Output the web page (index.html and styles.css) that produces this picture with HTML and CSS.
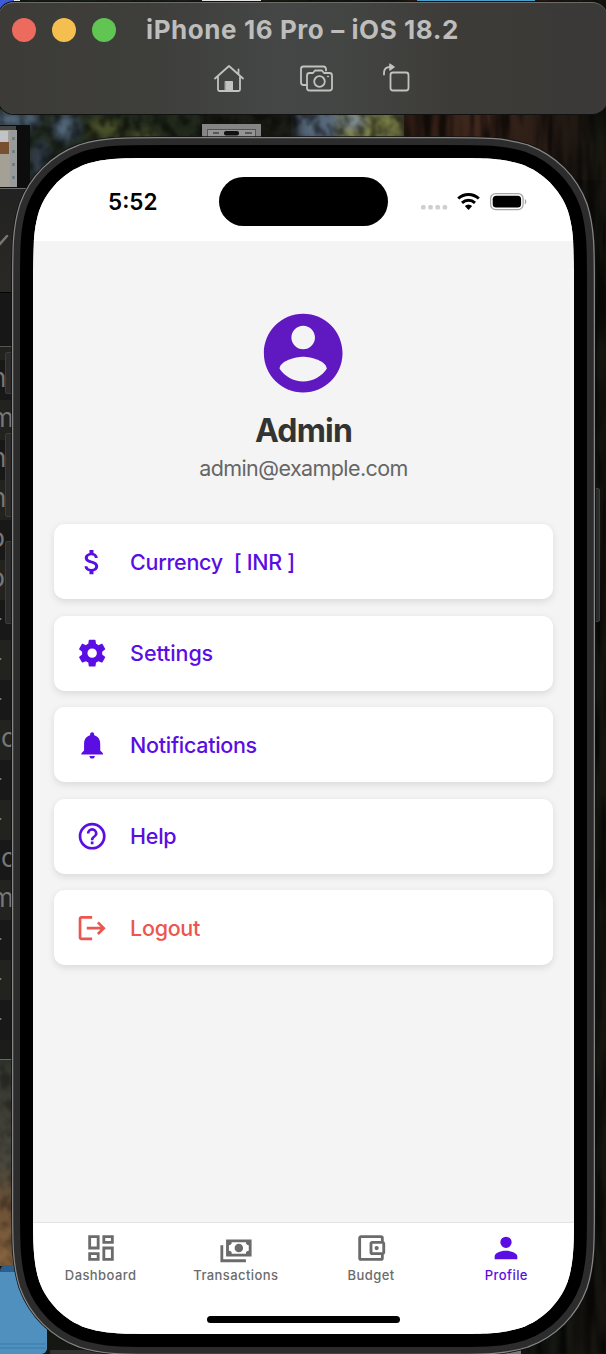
FILE: index.html
```
<!DOCTYPE html>
<html lang="en">
<head>
<meta charset="utf-8">
<title>Profile</title>
<link rel="stylesheet" href="styles.css">
</head>
<body>
<div class="desktop">
  <svg class="wallpaper" viewBox="0 0 606 1354" aria-hidden="true">
    <defs>
      <filter id="soft"><feGaussianBlur stdDeviation="5"/></filter>
      <filter id="leaves" x="0" y="0" width="100%" height="100%">
        <feTurbulence type="fractalNoise" baseFrequency="0.1 0.08" numOctaves="4" seed="6"/>
        <feColorMatrix values="0 0 0 0 0  0 0 0 0 0  0 0 0 0 0  3 0 0 0 -1.1"/>
        <feGaussianBlur stdDeviation="1"/>
      </filter>
      <filter id="bark" x="0" y="0" width="100%" height="100%">
        <feTurbulence type="fractalNoise" baseFrequency="0.12 0.012" numOctaves="3" seed="3"/>
        <feColorMatrix values="0 0 0 0 0  0 0 0 0 0  0 0 0 0 0  3 0 0 0 -1.1"/>
        <feGaussianBlur stdDeviation="1"/>
      </filter>
      <linearGradient id="trunk" x1="0" x2="1" y1="0" y2="0">
        <stop offset="0" stop-color="#2a1a12"/><stop offset=".35" stop-color="#40281d"/><stop offset=".75" stop-color="#251a14"/><stop offset="1" stop-color="#181811"/>
      </linearGradient>
      <linearGradient id="ground" x1="0" x2="0" y1="0" y2="1">
        <stop offset="0" stop-color="#33352f"/><stop offset=".5" stop-color="#4a483e"/><stop offset=".7" stop-color="#6b5137"/><stop offset="1" stop-color="#8a6540"/>
      </linearGradient>
    </defs>
    <rect width="606" height="1354" fill="#151712"/>
    <g filter="url(#soft)">
      <rect x="0" y="0" width="200" height="215" fill="#232b1c"/>
      <ellipse cx="15" cy="120" rx="25" ry="8" fill="#53677a"/>
      <ellipse cx="66" cy="128" rx="12" ry="12" fill="#52677a"/>
      <ellipse cx="40" cy="160" rx="10" ry="20" fill="#303d48"/>
      <ellipse cx="105" cy="128" rx="16" ry="10" fill="#49512b"/>
      <ellipse cx="145" cy="138" rx="15" ry="7" fill="#4d542f"/>
      <rect x="200" y="0" width="102" height="160" fill="#1b1a14"/>
      <rect x="300" y="108" width="38" height="50" fill="#56687a"/>
      <rect x="338" y="108" width="64" height="50" fill="#7d8148"/>
      <ellipse cx="353" cy="122" rx="12" ry="6" fill="#8294a4"/>
    </g>
    <rect x="0" y="0" width="404" height="220" filter="url(#leaves)" opacity=".5"/>
    <rect x="404" y="0" width="202" height="180" fill="url(#trunk)"/>
    <rect x="570" y="180" width="36" height="1174" fill="#171510"/>
    <rect x="404" y="0" width="202" height="1354" filter="url(#bark)" opacity=".65"/>
    <rect x="0" y="1060" width="40" height="206" fill="url(#ground)"/>
    <rect x="0" y="1060" width="40" height="206" filter="url(#leaves)" opacity=".3"/>
    <rect x="0" y="0" width="14" height="14" fill="#3d5bd7"/>
    <rect x="14" y="0" width="6" height="8" fill="#e7e7e2"/>
    <rect x="202" y="0" width="59" height="3" fill="#e5e3e6"/>
    <rect x="417" y="0" width="118" height="3" fill="#4aa0cd"/>
    <rect x="202" y="124" width="59" height="20" fill="#858585"/>
    <rect x="207.500" y="129.500" width="48" height="12" fill="#949494" stroke="#555"/>
    <rect x="224" y="131" width="15" height="4.500" rx="2" fill="#111"/>
    <path d="M213 133h6M245 133h7" stroke="#444" stroke-width="1.500"/>
    <rect x="0" y="125" width="30" height="63" fill="#0d0d0d"/>
    <path d="M0 126h16v4H0z" fill="#444"/>
    <rect x="0" y="130" width="17" height="57" fill="#a5a096"/>
    <rect x="0" y="131" width="8" height="18" fill="#c2c3c7"/>
    <rect x="0" y="142" width="9" height="12" fill="#76502f"/>
    <rect x="10" y="130" width="7" height="57" fill="#999b9b"/>
    <path d="M13.500 137v48" stroke="#697c7d" stroke-width="2.500" stroke-dasharray="3 10"/>
    <rect x="0" y="1265" width="47" height="89" rx="6" fill="#2d5f8b"/>
    <rect x="-8" y="1272" width="55" height="82" rx="6" fill="#4f90bf"/>
    <path d="M0 1344h46M0 1348h46" stroke="#397aaa"/>
    <rect x="50" y="1350" width="471" height="4" fill="#333"/>
    <rect x="430" y="1350.500" width="91" height="4" fill="#777"/>
  </svg>

  <aside class="list-window" aria-hidden="true">
    <div class="list-head"><svg viewBox="0 0 12 14"><path d="M-1 11l8-9" stroke="#777" stroke-width="2.500" stroke-linecap="round"/></svg></div>
    <div class="list-bar"></div>
    <div class="row short"></div>
    <div class="row a">n</div><div class="row b">m</div><div class="row a">n</div><div class="row b">n</div>
    <div class="row a p">p</div><div class="row b p">p</div><div class="row a">-</div><div class="row b">-</div>
    <div class="row a">-</div><div class="row b c">c</div><div class="row a">-</div><div class="row b">-</div>
    <div class="row a c">c</div><div class="row b">m</div><div class="row a">-</div><div class="row b">-</div>
    <div class="row a">-</div>
  </aside>

  <header class="toolbar">
    <div class="title-row">
      <div class="lights"><i class="close"></i><i class="min"></i><i class="max"></i></div>
      <span class="title">iPhone 16 Pro – iOS 18.2</span>
    </div>
    <div class="tools">
      <svg width="32" height="30" viewBox="0 0 32 30"><path d="M2 15.500 16 3l14 12.500M5 14v12.500q0 1.500 1.500 1.500h19q1.500 0 1.500-1.500V14M25.500 11V6.500"/><path class="solid" d="M12.500 18.500h7V28h-7z"/></svg>
      <svg width="34" height="30" viewBox="0 0 34 30"><path d="M7.500 22H4.500Q2 22 2 19.500V6q0-2.500 2.500-2.500h20Q26.500 3.500 27 6v1.500"/><path d="M10.500 10H14l2-2.500h7L25 10h5.500q2.500 0 2.500 2.500v12.500q0 2.500-2.500 2.500h-20Q8 27.500 8 25V12.500Q8 10 10.500 10Z"/><circle cx="20.500" cy="18.500" r="5.300"/><circle class="solid" cx="29" cy="13.500" r=".6"/></svg>
      <svg class="rotate" width="30" height="30" viewBox="0 0 30 30"><rect x="9.500" y="9.500" width="18" height="18" rx="2.500"/><path d="M3 11.500V10q0-6 6-6h2"/><path class="solid" d="m9 1 4.500 3L9 7.200z"/></svg>
    </div>
  </header>

  <i class="side-button mute"></i><i class="side-button up"></i><i class="side-button down"></i><i class="side-button power"></i>

  <main class="device">
    <svg class="shell" viewBox="-24 -24 589 1224" aria-hidden="true">
      <defs><path id="outline" d="M127.500 0H413.500C450.200 0 468.600 0 488.300 6.200C509.900 14.100 526.900 31.100 534.800 52.700C541 72.400 541 90.800 541 127.500V1048.500C541 1085.200 541 1103.600 534.800 1123.300C526.900 1144.900 509.900 1161.900 488.300 1169.800C468.600 1176 450.200 1176 413.500 1176H127.500C90.800 1176 72.400 1176 52.700 1169.800C31.100 1161.900 14.100 1144.900 6.200 1123.300C0 1103.600 0 1085.200 0 1048.500V127.500C0 90.800 0 72.400 6.200 52.700C14.100 31.100 31.100 14.100 52.700 6.200C72.400 0 90.800 0 127.500 0Z"/></defs>
      <use href="#outline" stroke="#111" stroke-width="43.500"/>
      <use href="#outline" stroke="#868686" stroke-width="42"/>
      <use href="#outline" stroke="#2c2c2c" stroke-width="39.500"/>
      <use href="#outline" stroke="#000" stroke-width="26"/>
    </svg>
    <div class="screen">
      <div class="status">
        <span class="time">5:52</span>
        <span class="island"></span>
        <svg class="indicators" width="108" height="24" viewBox="0 0 108 24">
          <g fill="#cfcfcf"><rect x="1" y="13" width="4.600" height="4.600" rx="1.500"/><rect x="8.200" y="13" width="4.600" height="4.600" rx="1.500"/><rect x="15.400" y="13" width="4.600" height="4.600" rx="1.500"/><rect x="22.600" y="13" width="4.600" height="4.600" rx="1.500"/></g>
          <g fill="none" stroke="#000" stroke-width="3"><path d="M38.200 6.500c6-5.300 14.600-5.300 20.600 0"/><path d="M42 10.900c3.800-3.400 9.200-3.400 13 0"/></g>
          <path d="M44.800 14c2.300-2 5.100-2 7.400 0l-3.700 4z"/>
          <rect x="70.600" y="1.600" width="32.500" height="16" rx="5" fill="none" stroke="#a6a6a6" stroke-width="1.300"/>
          <rect x="72.700" y="3.700" width="28.400" height="11.900" rx="3.500"/>
          <path d="M104.800 7v5.300c2-.7 2-4.600 0-5.300z" fill="#a6a6a6"/>
        </svg>
      </div>
      <section class="content">
        <div class="profile">
          <svg class="avatar" viewBox="0 0 24 24"><path d="M12 2C6.480 2 2 6.480 2 12s4.480 10 10 10 10-4.480 10-10S17.520 2 12 2zm0 3c1.660 0 3 1.340 3 3s-1.340 3-3 3-3-1.340-3-3 1.340-3 3-3zm0 14.200c-2.500 0-4.710-1.280-6-3.220.03-1.990 4-3.080 6-3.080 1.990 0 5.970 1.090 6 3.080-1.290 1.940-3.500 3.220-6 3.220z"/></svg>
          <h1 class="name">Admin</h1>
          <p class="email">admin@example.com</p>
        </div>
        <nav class="menu">
          <a class="card"><svg class="icon" viewBox="0 0 24 24"><path d="M11.800 10.900c-2.270-.59-3-1.200-3-2.150 0-1.090 1.010-1.850 2.700-1.850 1.780 0 2.440.85 2.500 2.100h2.210c-.07-1.720-1.120-3.300-3.210-3.810V3h-3v2.160c-1.940.42-3.500 1.680-3.500 3.610 0 2.310 1.910 3.460 4.700 4.130 2.500.6 3 1.480 3 2.410 0 .69-.49 1.790-2.700 1.790-2.060 0-2.870-.92-2.980-2.100h-2.200c.12 2.190 1.760 3.420 3.680 3.830V21h3v-2.150c1.950-.37 3.500-1.500 3.500-3.550 0-2.840-2.430-3.810-4.700-4.400z"/></svg><span class="label currency">Currency&nbsp; [ INR ]</span></a>
          <a class="card"><svg class="icon" viewBox="0 0 24 24"><path d="M12,15.500A3.500,3.500 0 0,1 8.500,12A3.500,3.500 0 0,1 12,8.500A3.500,3.500 0 0,1 15.500,12A3.500,3.500 0 0,1 12,15.500M19.430,12.970C19.470,12.650 19.500,12.330 19.500,12C19.500,11.670 19.470,11.340 19.430,11L21.540,9.370C21.730,9.220 21.780,8.950 21.660,8.730L19.660,5.270C19.540,5.050 19.270,4.960 19.050,5.050L16.560,6.050C16.040,5.660 15.500,5.320 14.870,5.070L14.500,2.420C14.460,2.180 14.250,2 14,2H10C9.750,2 9.540,2.180 9.500,2.420L9.130,5.070C8.500,5.320 7.960,5.660 7.440,6.050L4.950,5.050C4.730,4.960 4.460,5.050 4.340,5.270L2.340,8.730C2.210,8.950 2.270,9.220 2.460,9.370L4.570,11C4.530,11.340 4.500,11.670 4.500,12C4.500,12.330 4.530,12.650 4.570,12.970L2.460,14.630C2.270,14.780 2.210,15.050 2.340,15.270L4.340,18.730C4.460,18.950 4.730,19.030 4.950,18.950L7.440,17.940C7.960,18.340 8.500,18.680 9.130,18.930L9.500,21.580C9.540,21.820 9.750,22 10,22H14C14.250,22 14.460,21.820 14.500,21.580L14.870,18.930C15.500,18.670 16.040,18.340 16.560,17.940L19.050,18.950C19.270,19.030 19.540,18.950 19.660,18.730L21.660,15.270C21.780,15.050 21.730,14.780 21.540,14.630L19.430,12.970Z"/></svg><span class="label settings">Settings</span></a>
          <a class="card"><svg class="icon" viewBox="0 0 24 24"><path d="M12 22c1.100 0 2-.9 2-2h-4c0 1.100.89 2 2 2zm6-6v-5c0-3.070-1.640-5.640-4.500-6.320V4c0-.83-.67-1.500-1.500-1.500s-1.500.67-1.500 1.500v.68C7.630 5.360 6 7.920 6 11v5l-2 2v1h16v-1l-2-2z"/></svg><span class="label">Notifications</span></a>
          <a class="card"><svg class="icon" viewBox="0 0 24 24"><path d="M11,18H13V16H11V18M12,2A10,10 0 0,0 2,12A10,10 0 0,0 12,22A10,10 0 0,0 22,12A10,10 0 0,0 12,2M12,20C7.590,20 4,16.410 4,12C4,7.590 7.590,4 12,4C16.410,4 20,7.590 20,12C20,16.410 16.410,20 12,20M12,6A4,4 0 0,0 8,10H10A2,2 0 0,1 12,8A2,2 0 0,1 14,10C14,12 11,11.750 11,15H13C13,12.750 16,12.500 16,10A4,4 0 0,0 12,6Z"/></svg><span class="label">Help</span></a>
          <a class="card danger"><svg class="icon" viewBox="0 0 24 24"><path d="M17 7L15.590 8.410 18.170 11H8V13H18.170L15.590 15.580 17 17 22 12M4 5H12V3H4C2.900 3 2 3.900 2 5V19C2 20.100 2.900 21 4 21H12V19H4V5Z"/></svg><span class="label">Logout</span></a>
        </nav>
      </section>
      <footer class="tabs">
        <a class="tab"><svg viewBox="0 0 24 24"><path d="M19,5V7H15V5H19M9,5V11H5V5H9M19,13V19H15V13H19M9,17V19H5V17H9M21,3H13V9H21V3M11,3H3V13H11V3M21,11H13V21H21V11M11,15H3V21H11V15Z"/></svg><span>Dashboard</span></a>
        <a class="tab"><svg viewBox="0 0 24 24"><path d="M5,6H23V18H5V6M14,9A3,3 0 0,1 17,12A3,3 0 0,1 14,15A3,3 0 0,1 11,12A3,3 0 0,1 14,9M9,8A2,2 0 0,1 7,10V14A2,2 0 0,1 9,16H19A2,2 0 0,1 21,14V10A2,2 0 0,1 19,8H9M1,10H3V20H19V22H1V10Z"/></svg><span>Transactions</span></a>
        <a class="tab"><svg viewBox="0 0 24 24"><path d="M5,3C3.890,3 3,3.900 3,5V19A2,2 0 0,0 5,21H19A2,2 0 0,0 21,19V16.720C21.590,16.370 22,15.740 22,15V9C22,8.260 21.590,7.630 21,7.280V5A2,2 0 0,0 19,3H5M5,5H19V7H13A2,2 0 0,0 11,9V15A2,2 0 0,0 13,17H19V19H5V5M13,9H20V15H13V9M16,10.500A1.500,1.500 0 0,0 14.500,12A1.500,1.500 0 0,0 16,13.500A1.500,1.500 0 0,0 17.500,12A1.500,1.500 0 0,0 16,10.500Z"/></svg><span>Budget</span></a>
        <a class="tab active"><svg viewBox="0 0 24 24"><path d="M12,4A4,4 0 0,1 16,8A4,4 0 0,1 12,12A4,4 0 0,1 8,8A4,4 0 0,1 12,4M12,14C16.420,14 20,15.790 20,18V20H4V18C4,15.790 7.580,14 12,14Z"/></svg><span>Profile</span></a>
        <i class="home-indicator"></i>
      </footer>
    </div>
  </main>
</div>
</body>
</html>
```
FILE: styles.css
```
* { box-sizing: border-box; }
body { margin: 0; font-family: Inter, "Liberation Sans", sans-serif; }
h1, p { margin: 0; }
.desktop { position: relative; width: 606px; height: 1354px; overflow: hidden; background: #111; }
.wallpaper { position: absolute; inset: 0; width: 606px; height: 1354px; }

/* Window peeking out behind the device */
.list-window { position: absolute; left: 0; top: 188px; width: 30px; height: 872px; overflow: hidden; background: #1c1c1a; border-top: 1px solid #6a6a6a; border-bottom: 1px solid #666; color: #777; font-size: 26px; }
.list-head { height: 104px; padding-top: 45px; background: linear-gradient(#222, #2a2925); border-bottom: 1px solid #050505; }
.list-head svg { display: block; width: 12px; height: 14px; }
.list-bar { height: 54px; background: #171717; border-bottom: 1px solid #555; }
.row { height: 40px; line-height: 36px; text-indent: -9px; overflow: hidden; }
.row.short { height: 13px; background: #22221f; }
.row.a { background: #181818; }
.row.b { background: #22221f; }
.row.p { text-indent: -11px; }
.row.c { text-indent: 1px; }

/* Simulator title bar */
.toolbar { position: absolute; left: -2px; top: 2px; width: 610px; height: 112px; border-radius: 16px; background: linear-gradient(90deg, #3c3b38, #3e3e3b 25%, #444746 46%, #434543 58%, #3d3b38 75%, #3a3937); border-top: 1px solid #6b6b69; box-shadow: 0 0 0 1px #111; }
.title-row { display: flex; align-items: center; height: 50px; padding: 3px 0 0 14px; }
.lights { display: flex; gap: 16px; }
.lights i { width: 24px; height: 24px; border-radius: 50%; }
.close { background: #ed6a5f; }
.min { background: #f5bf4f; }
.max { background: #61c554; }
.title { margin-left: 30px; font-size: 26px; font-weight: 700; line-height: 30px; letter-spacing: .58px; color: #bdbdbb; white-space: nowrap; }
.tools { display: flex; gap: 54px; padding-left: 215px; margin-top: 10px; }
.tools svg { fill: none; stroke: #c2c2c0; stroke-width: 1.800; stroke-linejoin: round; stroke-linecap: round; }
.tools .solid { fill: #c2c2c0; stroke-width: 1; }
.tools .rotate { margin-left: -6px; }

/* Device */
.side-button { position: absolute; left: 5px; width: 9px; background: #2b2b2b; border: 1px solid #3c3c3c; border-radius: 2px 0 0 2px; }
.mute { top: 352px; height: 42px; }
.up { top: 433px; height: 84px; }
.down { top: 541px; height: 83px; }
.power { left: 591px; top: 488px; height: 134px; border-radius: 0 2px 2px 0; }
.device { position: absolute; left: 33px; top: 158px; width: 541px; height: 1176px; }
.shell { position: absolute; left: -24px; top: -24px; width: 589px; height: 1224px; fill: none; }
.screen { position: relative; display: flex; flex-direction: column; width: 541px; height: 1176px; background: #f4f4f4; clip-path: path("M127.5 0H413.5C450.2 0 468.6 0 488.3 6.2C509.9 14.1 526.9 31.1 534.8 52.7C541 72.4 541 90.8 541 127.5V1048.5C541 1085.2 541 1103.6 534.8 1123.3C526.9 1144.9 509.9 1161.9 488.3 1169.8C468.6 1176 450.2 1176 413.5 1176H127.5C90.8 1176 72.4 1176 52.7 1169.8C31.1 1161.9 14.1 1144.9 6.2 1123.3C0 1103.6 0 1085.2 0 1048.5V127.5C0 90.8 0 72.4 6.2 52.7C14.1 31.1 31.1 14.1 52.7 6.2C72.4 0 90.8 0 127.5 0Z"); }
.status { display: grid; grid-template-columns: 186px 169px 1fr; height: 83px; padding-top: 19px; background: #fff; flex: none; }
.time { padding: 10px 0 0 75px; font-size: 22.500px; line-height: 30px; font-weight: 600; letter-spacing: 0; color: #000; }
.island { height: 49px; border-radius: 24.500px; background: #000; }
.indicators { margin: 15px 0 0 32px; }
.content { flex: 1; padding: 64.700px 21.300px 0; }
.profile { display: flex; flex-direction: column; align-items: center; }
.avatar { width: 94.400px; height: 94.400px; fill: #6018c0; }
.name { margin-top: 11px; font-size: 32px; line-height: 40px; font-weight: 700; letter-spacing: -.8px; color: #333; }
.email { margin-top: 3px; font-size: 21.500px; line-height: 28px; letter-spacing: -.58px; color: #666; }
.menu { display: grid; gap: 16.100px; margin-top: 42px; }
.card { display: flex; align-items: center; gap: 22px; height: 75.400px; padding-left: 21.500px; border-radius: 10.800px; background: #fff; color: #5a0ee3; box-shadow: 0 2.700px 7px rgba(0, 0, 0, .1); }
.card.danger { color: #ec5550; }
.icon { width: 32.300px; height: 32.300px; fill: currentColor; flex: none; }
.label { font-size: 21.500px; line-height: 28px; font-weight: 500; letter-spacing: -.3px; }
.label.settings { letter-spacing: -.1px; }
.tabs { position: relative; display: grid; grid-template-columns: repeat(4, 1fr); height: 112px; padding-top: 7.500px; border-top: 1px solid #e4e4e4; background: #fff; flex: none; }
.tab { display: flex; flex-direction: column; align-items: center; color: #6b6b6b; font-size: 13px; font-weight: 500; line-height: 18px; letter-spacing: .42px; }
.tab svg { width: 34px; height: 34px; fill: currentColor; margin-bottom: 1.500px; }
.tab.active { color: #5a0ee3; }
.home-indicator { position: absolute; left: 174px; bottom: 11px; width: 193px; height: 7px; border-radius: 4px; background: #000; }
```
